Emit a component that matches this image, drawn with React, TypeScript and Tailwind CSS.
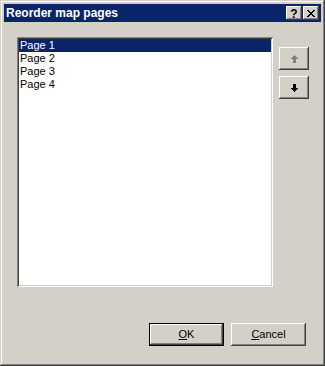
const raised =
  "shadow-[inset_-1px_-1px_0_#404040,inset_1px_1px_0_#ffffff,inset_-2px_-2px_0_#808080,inset_2px_2px_0_#d4d0c8]";

function TitleButton({ children }: { children: React.ReactNode }) {
  return (
    <div
      className={`w-[16px] h-[14px] bg-[#d4d0c8] flex items-center justify-center ${raised}`}
    >
      {children}
    </div>
  );
}

// pixel arrows, 9x8
function ArrowUp({ color }: { color: string }) {
  return (
    <svg width="9" height="8" viewBox="0 0 9 8" shapeRendering="crispEdges">
      <rect x="4" y="0" width="1" height="1" fill={color} />
      <rect x="3" y="1" width="3" height="1" fill={color} />
      <rect x="2" y="2" width="5" height="1" fill={color} />
      <rect x="1" y="3" width="7" height="1" fill={color} />
      <rect x="3" y="4" width="3" height="4" fill={color} />
    </svg>
  );
}

function ArrowDown({ color }: { color: string }) {
  return (
    <svg width="9" height="8" viewBox="0 0 9 8" shapeRendering="crispEdges">
      <rect x="3" y="0" width="3" height="4" fill={color} />
      <rect x="1" y="4" width="7" height="1" fill={color} />
      <rect x="2" y="5" width="5" height="1" fill={color} />
      <rect x="3" y="6" width="3" height="1" fill={color} />
      <rect x="4" y="7" width="1" height="1" fill={color} />
    </svg>
  );
}

const pages = ["Page 1", "Page 2", "Page 3", "Page 4"];

export default function App() {
  return (
    <div
      className="w-[325px] h-[366px] bg-[#d4d0c8] p-[4px] flex flex-col shadow-[inset_-1px_-1px_0_#404040,inset_1px_1px_0_#d4d0c8,inset_-2px_-2px_0_#808080,inset_2px_2px_0_#ffffff] text-[11px] text-black"
      style={{ fontFamily: '"Liberation Sans", Arial, sans-serif' }}
    >
      {/* title bar */}
      <div className="h-[18px] bg-[#0a246a] flex items-center pl-[2px] pr-[2px]">
        <span className="flex-1 text-white font-bold text-[12px] leading-none">
          Reorder map pages
        </span>
        <div className="flex gap-[1px]">
          <TitleButton>
            <span className="font-bold text-[12px] leading-none mt-[1px]">?</span>
          </TitleButton>
          <TitleButton>
            <svg width="8" height="7" viewBox="0 0 8 7" shapeRendering="crispEdges">
              <path d="M0 0h2l2 2.5L6 0h2L5 3.5 8 7H6L4 4.5 2 7H0l3-3.5z" fill="#000" />
            </svg>
          </TitleButton>
        </div>
      </div>

      {/* body */}
      <div className="flex-1 flex flex-col pl-[13px] pt-[15px]">
        <div className="flex gap-[6px]">
          <div className="w-[256px] h-[250px] bg-white p-[2px] shadow-[inset_1px_1px_0_#808080,inset_-1px_-1px_0_#ffffff,inset_2px_2px_0_#404040,inset_-2px_-2px_0_#d4d0c8]">
            {pages.map((p, i) => (
              <div
                key={p}
                className={`h-[13px] leading-[13px] pl-[1px] ${
                  i === 0 ? "bg-[#0a246a] text-white" : ""
                }`}
              >
                {p}
              </div>
            ))}
          </div>
          <div className="flex flex-col gap-[6px] mt-[10px]">
            <div
              className={`w-[30px] h-[23px] bg-[#d4d0c8] flex items-center justify-center ${raised}`}
            >
              <ArrowUp color="#808080" />
            </div>
            <div
              className={`w-[30px] h-[23px] bg-[#d4d0c8] flex items-center justify-center ${raised}`}
            >
              <ArrowDown color="#000000" />
            </div>
          </div>
        </div>

        <div className="flex justify-end gap-[7px] mt-[36px] pr-[15px]">
          <div className="w-[75px] h-[23px] bg-[#d4d0c8] flex items-center justify-center border border-black shadow-[inset_-1px_-1px_0_#404040,inset_1px_1px_0_#ffffff,inset_-2px_-2px_0_#808080]">
            <span>
              <u>O</u>K
            </span>
          </div>
          <div
            className={`w-[75px] h-[23px] bg-[#d4d0c8] flex items-center justify-center ${raised}`}
          >
            <span>
              <u>C</u>ancel
            </span>
          </div>
        </div>
      </div>
    </div>
  );
}
